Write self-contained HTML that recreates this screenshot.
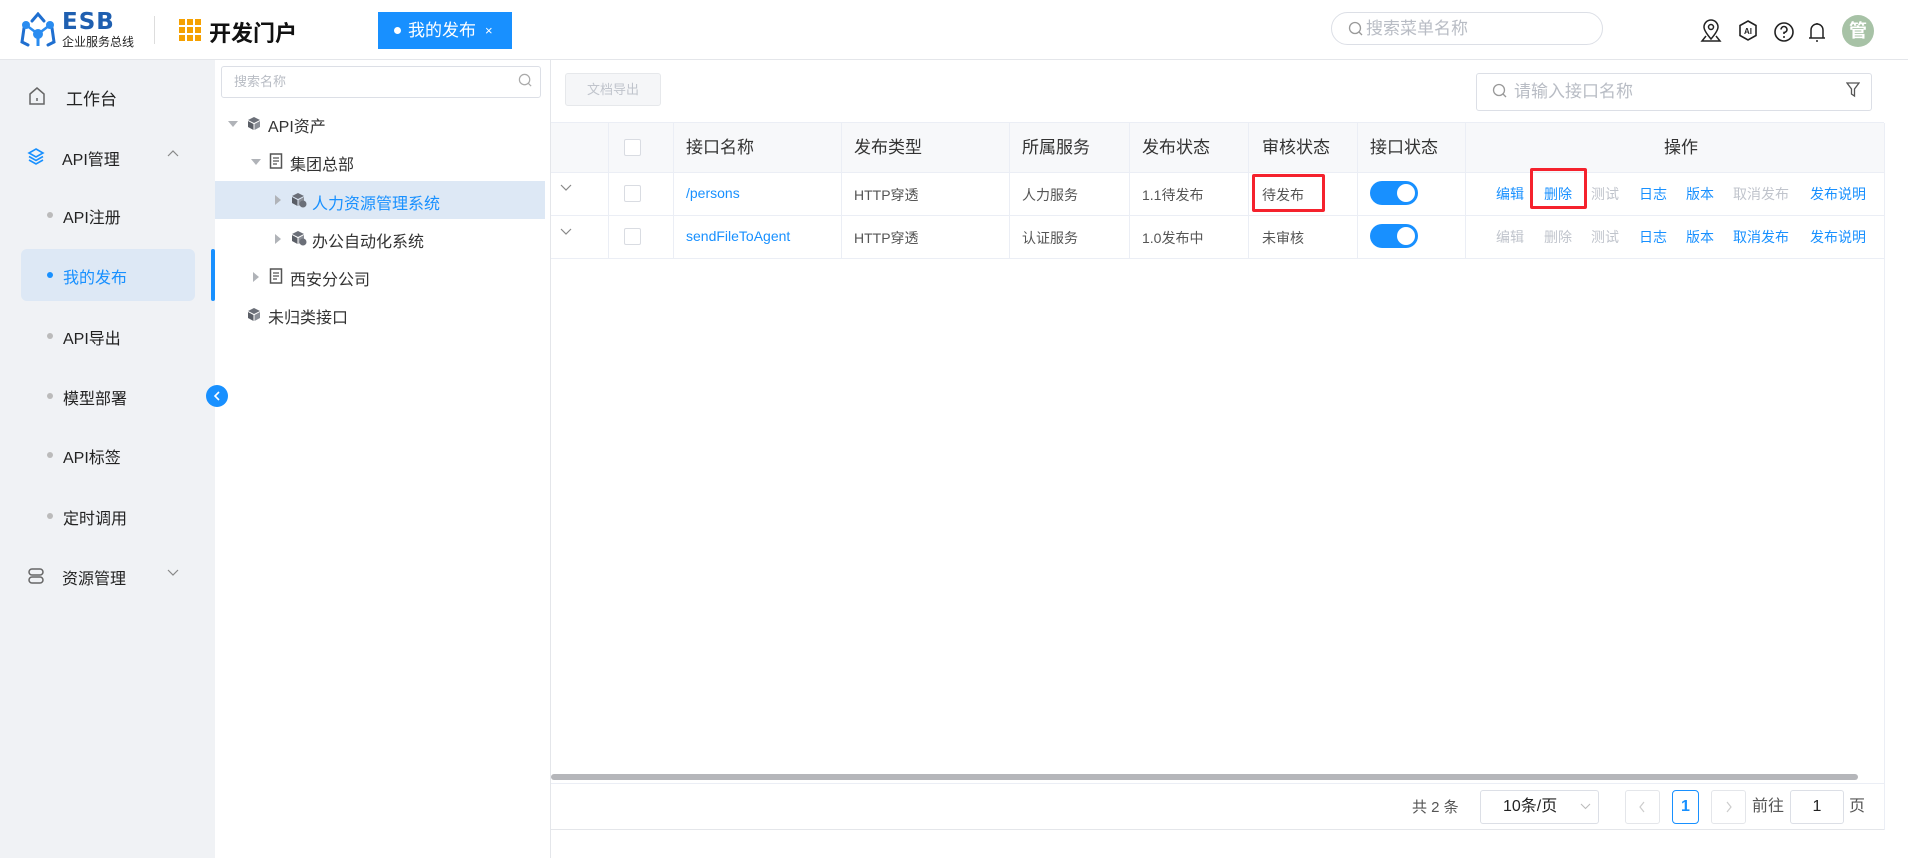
<!DOCTYPE html>
<html><head><meta charset="utf-8"><style>
*{box-sizing:border-box;margin:0;padding:0}
body{width:1908px;height:858px;overflow:hidden;background:#fff;font-family:"Liberation Sans","Noto Sans CJK SC",sans-serif;color:#333;position:relative}
.abs{position:absolute}
.hdr{left:0;top:0;width:1908px;height:60px;border-bottom:1px solid #e4e6ea;background:#fff}
.side{left:0;top:60px;width:215px;height:798px;background:#f0f2f5}
.si{position:absolute;font-size:16px;color:#222;white-space:nowrap}
.dot{position:absolute;width:6px;height:6px;border-radius:3px;background:#bbb}
.tree{left:215px;top:60px;width:336px;height:798px;border-right:1px solid #e4e6ea;background:#fff}
.ti{position:absolute;font-size:16px;color:#333;white-space:nowrap}
.tri{position:absolute;width:0;height:0}
.th{position:absolute;top:123px;height:49px;line-height:49px;font-size:17px;color:#333;background:#f7f8fa}
.td{position:absolute;font-size:14px;color:#555;white-space:nowrap}
.op{position:absolute;font-size:14px;white-space:nowrap;transform:translateX(-50%)}
.b{color:#1890ff}.g{color:#c0c4cc}
.cb{position:absolute;width:17px;height:17px;border:1px solid #d9dce2;border-radius:2px;background:#fff}
.tog{position:absolute;width:48px;height:24px;border-radius:12px;background:#1890ff}
.tog:after{content:"";position:absolute;right:3px;top:3px;width:18px;height:18px;border-radius:9px;background:#fff}
.vl{position:absolute;width:1px;background:#ebeef5}
.hl{position:absolute;height:1px;background:#ebeef5}
</style></head><body>
<div class="abs hdr"></div>
<svg class="abs" style="left:18px;top:12px" width="44" height="36" viewBox="0 0 44 36"><g fill="none" stroke="#1f6fd0" stroke-width="3" stroke-linecap="round"><path d="M14 9 L20 2 L26 9"/><path d="M6 16 L4 30 L10 33"/><path d="M34 16 L36 30 L30 33"/></g><g fill="#2a8cf0"><circle cx="8" cy="13" r="4"/><circle cx="32" cy="13" r="4"/><circle cx="20" cy="22" r="5"/><rect x="18.5" y="22" width="3" height="12"/></g><path d="M8 13 L20 22 L32 13" stroke="#2a8cf0" stroke-width="2.5" fill="none"/></svg>
<div class="abs" style="left:62px;top:9px;font-size:23px;font-weight:bold;color:#1f5fb0;letter-spacing:1px;font-family:'DejaVu Sans',sans-serif">ESB</div>
<div class="abs" style="left:62px;top:33px;font-size:12px;color:#222">企业服务总线</div>
<div class="abs" style="left:154px;top:16px;width:1px;height:28px;background:#ddd"></div>
<svg class="abs" style="left:179px;top:19px" width="22" height="22" viewBox="0 0 22 22" fill="#f5a000"><rect x="0" y="0" width="6" height="6"/><rect x="8" y="0" width="6" height="6"/><rect x="16" y="0" width="6" height="6"/><rect x="0" y="8" width="6" height="6"/><rect x="8" y="8" width="6" height="6"/><rect x="16" y="8" width="6" height="6"/><rect x="0" y="16" width="6" height="6"/><rect x="8" y="16" width="6" height="6"/><rect x="16" y="16" width="6" height="6"/></svg>
<div class="abs" style="left:209px;top:16px;font-size:22px;font-weight:bold;color:#111">开发门户</div>
<div class="abs" style="left:378px;top:12px;width:134px;height:37px;background:#1890ff;color:#fff;font-size:17px;line-height:37px"><span style="position:absolute;left:16px;top:15px;width:7px;height:7px;border-radius:4px;background:#fff"></span><span style="position:absolute;left:30px">我的发布</span><span style="position:absolute;left:107px;font-size:13px">×</span></div>
<div class="abs" style="left:1331px;top:12px;width:272px;height:33px;border:1px solid #dcdfe6;border-radius:17px;font-size:17px;color:#b8bcc4;line-height:31px;padding-left:34px">搜索菜单名称</div>
<svg class="abs" style="left:1348px;top:21px" width="16" height="16" viewBox="0 0 16 16"><circle cx="7" cy="7" r="5.5" fill="none" stroke="#999" stroke-width="1.3"/><path d="M11 11l3 3" stroke="#999" stroke-width="1.3"/></svg>
<svg class="abs" style="left:1700px;top:19px" width="22" height="24" viewBox="0 0 22 24" fill="none" stroke="#222" stroke-width="1.5"><path d="M11 20 C5 13 4 10 4 8 A7 7 0 0 1 18 8 C18 10 17 13 11 20Z"/><circle cx="11" cy="8" r="2.5"/><path d="M6 17 L2 22 H20 L16 17"/></svg>
<svg class="abs" style="left:1737px;top:19px" width="22" height="24" viewBox="0 0 22 24"><path d="M11 2 L19 6.5 V16.5 L11 21 L3 16.5 V6.5Z" fill="none" stroke="#222" stroke-width="1.6"/><text x="11" y="15" font-size="8" font-weight="bold" text-anchor="middle" font-family="Liberation Sans" fill="#222">AI</text></svg>
<svg class="abs" style="left:1773px;top:21px" width="22" height="22" viewBox="0 0 22 22"><circle cx="11" cy="11" r="9" fill="none" stroke="#222" stroke-width="1.6"/><path d="M8 8.5 A3 3 0 1 1 11 11.5 V13" fill="none" stroke="#222" stroke-width="1.6"/><circle cx="11" cy="16" r="1" fill="#222"/></svg>
<svg class="abs" style="left:1806px;top:20px" width="22" height="24" viewBox="0 0 22 24" fill="none" stroke="#222" stroke-width="1.5"><path d="M5 18 V10 A6 6 0 0 1 17 10 V18"/><path d="M3 18 H19"/><path d="M11 3 V4"/><path d="M10 21 H12"/></svg>
<div class="abs" style="left:1842px;top:15px;width:32px;height:32px;border-radius:16px;background:#a7c2a6;color:#fff;font-size:18px;font-weight:bold;text-align:center;line-height:32px">管</div>

<div class="abs side"></div>
<svg class="abs" style="left:28px;top:86px" width="18" height="20" viewBox="0 0 18 20"><path d="M2 8 L9 2 L16 8 V18 H2Z" fill="none" stroke="#666" stroke-width="1.5"/><path d="M9 12v3" stroke="#666" stroke-width="1.5"/></svg>
<div class="si" style="left:66px;top:85px;font-size:17px">工作台</div>
<svg class="abs" style="left:27px;top:147px" width="18" height="18" viewBox="0 0 18 18" fill="none" stroke="#1890ff" stroke-width="1.6"><path d="M9 2 L16 6 L9 10 L2 6Z"/><path d="M2 9.5 L9 13.5 L16 9.5"/><path d="M2 13 L9 17 L16 13"/></svg>
<div class="si" style="left:62px;top:146px">API管理</div>
<svg class="abs" style="left:167px;top:149px" width="12" height="8" viewBox="0 0 12 8"><path d="M1 7 L6 2 L11 7" fill="none" stroke="#888" stroke-width="1.2"/></svg>
<div class="abs" style="left:21px;top:249px;width:174px;height:52px;border-radius:6px;background:#dde8f5"></div>
<div class="abs" style="left:211px;top:249px;width:4px;height:52px;border-radius:2px;background:#1890ff"></div>
<div class="dot" style="left:47px;top:212px"></div><div class="si" style="left:63px;top:204px">API注册</div>
<div class="dot" style="left:47px;top:272px;background:#1890ff"></div><div class="si" style="left:63px;top:264px;color:#1890ff">我的发布</div>
<div class="dot" style="left:47px;top:333px"></div><div class="si" style="left:63px;top:325px">API导出</div>
<div class="dot" style="left:47px;top:393px"></div><div class="si" style="left:63px;top:385px">模型部署</div>
<div class="dot" style="left:47px;top:452px"></div><div class="si" style="left:63px;top:444px">API标签</div>
<div class="dot" style="left:47px;top:513px"></div><div class="si" style="left:63px;top:505px">定时调用</div>
<svg class="abs" style="left:27px;top:567px" width="18" height="18" viewBox="0 0 18 18" fill="none" stroke="#666" stroke-width="1.5"><rect x="2" y="2" width="14" height="6" rx="3"/><rect x="2" y="10" width="14" height="6" rx="3"/></svg>
<div class="si" style="left:62px;top:565px">资源管理</div>
<svg class="abs" style="left:167px;top:569px" width="12" height="8" viewBox="0 0 12 8"><path d="M1 1 L6 6 L11 1" fill="none" stroke="#888" stroke-width="1.2"/></svg>
<div class="abs" style="left:206px;top:385px;width:22px;height:22px;border-radius:11px;background:#1890ff;z-index:3"></div>
<svg class="abs" style="left:211px;top:390px;z-index:4" width="12" height="12" viewBox="0 0 12 12"><path d="M8 2 L4 6 L8 10" fill="none" stroke="#fff" stroke-width="1.6"/></svg>

<div class="abs tree"></div>
<div class="abs" style="left:221px;top:66px;width:320px;height:32px;border:1px solid #dcdfe6;border-radius:3px;font-size:13px;color:#b8bcc4;line-height:30px;padding-left:12px">搜索名称</div>
<svg class="abs" style="left:518px;top:73px" width="15" height="15" viewBox="0 0 16 16"><circle cx="7" cy="7" r="5.5" fill="none" stroke="#aaa" stroke-width="1.3"/><path d="M11 11l3 3" stroke="#aaa" stroke-width="1.3"/></svg>
<div class="abs" style="left:215px;top:181px;width:330px;height:38px;background:#dde8f5"></div>
<svg width="0" height="0" style="position:absolute"><defs>
<g id="cube"><path d="M7 1 L13 4 L7 7 L1 4Z" fill="#6b6f78"/><path d="M1 5 L6.5 8 V14 L1 11Z" fill="#5a5e66"/><path d="M13 5 L7.5 8 V14 L13 11Z" fill="#8a8e96"/></g>
<g id="doc"><rect x="1.5" y="1" width="11" height="14" fill="none" stroke="#555" stroke-width="1.5"/><path d="M4 5h6M4 8h6M4 11h4" stroke="#555" stroke-width="1.3"/></g>
</defs></svg>
<div class="tri" style="left:228px;top:121px;border-left:5px solid transparent;border-right:5px solid transparent;border-top:6px solid #b0b3b8"></div>
<svg class="abs" style="left:247px;top:116px" width="14" height="15"><use href="#cube"/></svg>
<div class="ti" style="left:268px;top:113px">API资产</div>
<div class="tri" style="left:251px;top:159px;border-left:5px solid transparent;border-right:5px solid transparent;border-top:6px solid #b0b3b8"></div>
<svg class="abs" style="left:269px;top:153px" width="14" height="16"><use href="#doc"/></svg>
<div class="ti" style="left:290px;top:151px">集团总部</div>
<div class="tri" style="left:275px;top:195px;border-top:5px solid transparent;border-bottom:5px solid transparent;border-left:6px solid #b0b3b8"></div>
<svg class="abs" style="left:291px;top:192px" width="16" height="16" viewBox="0 0 16 16"><use href="#cube"/><circle cx="12" cy="12" r="3.5" fill="#6b6f78"/></svg>
<div class="ti" style="left:312px;top:190px;color:#1890ff">人力资源管理系统</div>
<div class="tri" style="left:275px;top:234px;border-top:5px solid transparent;border-bottom:5px solid transparent;border-left:6px solid #b0b3b8"></div>
<svg class="abs" style="left:291px;top:230px" width="16" height="16" viewBox="0 0 16 16"><use href="#cube"/><circle cx="12" cy="12" r="3.5" fill="#6b6f78"/></svg>
<div class="ti" style="left:312px;top:228px">办公自动化系统</div>
<div class="tri" style="left:253px;top:272px;border-top:5px solid transparent;border-bottom:5px solid transparent;border-left:6px solid #b0b3b8"></div>
<svg class="abs" style="left:269px;top:268px" width="14" height="16"><use href="#doc"/></svg>
<div class="ti" style="left:290px;top:266px">西安分公司</div>
<svg class="abs" style="left:247px;top:307px" width="14" height="15"><use href="#cube"/></svg>
<div class="ti" style="left:268px;top:304px">未归类接口</div>

<div class="abs" style="left:565px;top:73px;width:96px;height:33px;background:#f5f6f8;border:1px solid #e6e8eb;border-radius:3px;font-size:13px;color:#c0c4cc;text-align:center;line-height:31px">文档导出</div>
<div class="abs" style="left:1476px;top:73px;width:396px;height:38px;border:1px solid #dcdfe6;border-radius:3px;font-size:17px;color:#b8bcc4;line-height:36px;padding-left:37px">请输入接口名称</div>
<svg class="abs" style="left:1492px;top:83px" width="16" height="16" viewBox="0 0 16 16"><circle cx="7" cy="7" r="5.5" fill="none" stroke="#999" stroke-width="1.3"/><path d="M11 11l3 3" stroke="#999" stroke-width="1.3"/></svg>
<svg class="abs" style="left:1846px;top:82px" width="14" height="16" viewBox="0 0 14 16" fill="none" stroke="#555" stroke-width="1.3"><path d="M1 1 H13 L8.5 7 V14 L5.5 12 V7Z"/></svg>

<div class="abs" style="left:551px;top:123px;width:1333px;height:49px;background:#f7f8fa"></div>
<div class="hl" style="left:551px;top:122px;width:1333px"></div>
<div class="hl" style="left:551px;top:172px;width:1333px"></div>
<div class="hl" style="left:551px;top:215px;width:1333px"></div>
<div class="hl" style="left:551px;top:258px;width:1333px"></div>
<div class="vl" style="left:608px;top:123px;height:135px"></div>
<div class="vl" style="left:673px;top:123px;height:135px"></div>
<div class="vl" style="left:841px;top:123px;height:135px"></div>
<div class="vl" style="left:1009px;top:123px;height:135px"></div>
<div class="vl" style="left:1129px;top:123px;height:135px"></div>
<div class="vl" style="left:1248px;top:123px;height:135px"></div>
<div class="vl" style="left:1357px;top:123px;height:135px"></div>
<div class="vl" style="left:1465px;top:123px;height:135px"></div>
<div class="vl" style="left:1884px;top:123px;height:707px"></div>
<div class="cb" style="left:624px;top:139px"></div>
<div class="th" style="left:686px">接口名称</div>
<div class="th" style="left:854px">发布类型</div>
<div class="th" style="left:1022px">所属服务</div>
<div class="th" style="left:1142px">发布状态</div>
<div class="th" style="left:1262px">审核状态</div>
<div class="th" style="left:1370px">接口状态</div>
<div class="th" style="left:1664px">操作</div>

<svg class="abs" style="left:560px;top:184px" width="12" height="8"><path d="M1 1 L6 6 L11 1" fill="none" stroke="#888" stroke-width="1.2"/></svg>
<div class="cb" style="left:624px;top:185px"></div>
<div class="td b" style="left:686px;top:185px">/persons</div>
<div class="td" style="left:854px;top:185px">HTTP穿透</div>
<div class="td" style="left:1022px;top:185px">人力服务</div>
<div class="td" style="left:1142px;top:185px">1.1待发布</div>
<div class="td" style="left:1262px;top:185px">待发布</div>
<div class="tog" style="left:1370px;top:181px"></div>
<div class="op b" style="left:1510px;top:184px">编辑</div>
<div class="op b" style="left:1558px;top:184px">删除</div>
<div class="op g" style="left:1605px;top:184px">测试</div>
<div class="op b" style="left:1653px;top:184px">日志</div>
<div class="op b" style="left:1700px;top:184px">版本</div>
<div class="op g" style="left:1761px;top:184px">取消发布</div>
<div class="op b" style="left:1838px;top:184px">发布说明</div>
<div class="abs" style="left:1252px;top:174px;width:73px;height:38px;border:3px solid #f5222d;border-radius:2px"></div>
<div class="abs" style="left:1530px;top:168px;width:57px;height:41px;border:3px solid #f5222d;border-radius:2px"></div>

<svg class="abs" style="left:560px;top:228px" width="12" height="8"><path d="M1 1 L6 6 L11 1" fill="none" stroke="#888" stroke-width="1.2"/></svg>
<div class="cb" style="left:624px;top:228px"></div>
<div class="td b" style="left:686px;top:228px">sendFileToAgent</div>
<div class="td" style="left:854px;top:228px">HTTP穿透</div>
<div class="td" style="left:1022px;top:228px">认证服务</div>
<div class="td" style="left:1142px;top:228px">1.0发布中</div>
<div class="td" style="left:1262px;top:228px">未审核</div>
<div class="tog" style="left:1370px;top:224px"></div>
<div class="op g" style="left:1510px;top:227px">编辑</div>
<div class="op g" style="left:1558px;top:227px">删除</div>
<div class="op g" style="left:1605px;top:227px">测试</div>
<div class="op b" style="left:1653px;top:227px">日志</div>
<div class="op b" style="left:1700px;top:227px">版本</div>
<div class="op b" style="left:1761px;top:227px">取消发布</div>
<div class="op b" style="left:1838px;top:227px">发布说明</div>

<div class="abs" style="left:551px;top:774px;width:1307px;height:6px;border-radius:3px;background:#b5b6ba"></div>
<div class="hl" style="left:551px;top:783px;width:1333px"></div>
<div class="hl" style="left:551px;top:829px;width:1333px;background:#e4e6ea"></div>
<div class="abs" style="left:1412px;top:796px;font-size:15px;color:#555">共 2 条</div>
<div class="abs" style="left:1480px;top:790px;width:119px;height:34px;border:1px solid #dcdfe6;border-radius:3px;font-size:16px;color:#222;line-height:32px;padding-left:22px">10条/页</div>
<svg class="abs" style="left:1580px;top:803px" width="11" height="7"><path d="M1 1 L5.5 5.5 L10 1" fill="none" stroke="#bbb" stroke-width="1.1"/></svg>
<div class="abs" style="left:1625px;top:790px;width:35px;height:34px;border:1px solid #e4e6ea;border-radius:3px"></div>
<svg class="abs" style="left:1638px;top:801px" width="8" height="12"><path d="M6 1 L2 6 L6 11" fill="none" stroke="#ccc" stroke-width="1.2"/></svg>
<div class="abs" style="left:1672px;top:790px;width:27px;height:34px;border:1px solid #1890ff;border-radius:4px;color:#1890ff;font-size:16px;font-weight:bold;text-align:center;line-height:32px">1</div>
<div class="abs" style="left:1711px;top:790px;width:35px;height:34px;border:1px solid #e4e6ea;border-radius:3px"></div>
<svg class="abs" style="left:1725px;top:801px" width="8" height="12"><path d="M2 1 L6 6 L2 11" fill="none" stroke="#ccc" stroke-width="1.2"/></svg>
<div class="abs" style="left:1752px;top:796px;font-size:16px;color:#555;line-height:22px">前往</div>
<div class="abs" style="left:1790px;top:790px;width:54px;height:34px;border:1px solid #dcdfe6;border-radius:3px;font-size:16px;color:#222;text-align:center;line-height:32px">1</div>
<div class="abs" style="left:1849px;top:796px;font-size:16px;color:#555;line-height:22px">页</div>
</body></html>
